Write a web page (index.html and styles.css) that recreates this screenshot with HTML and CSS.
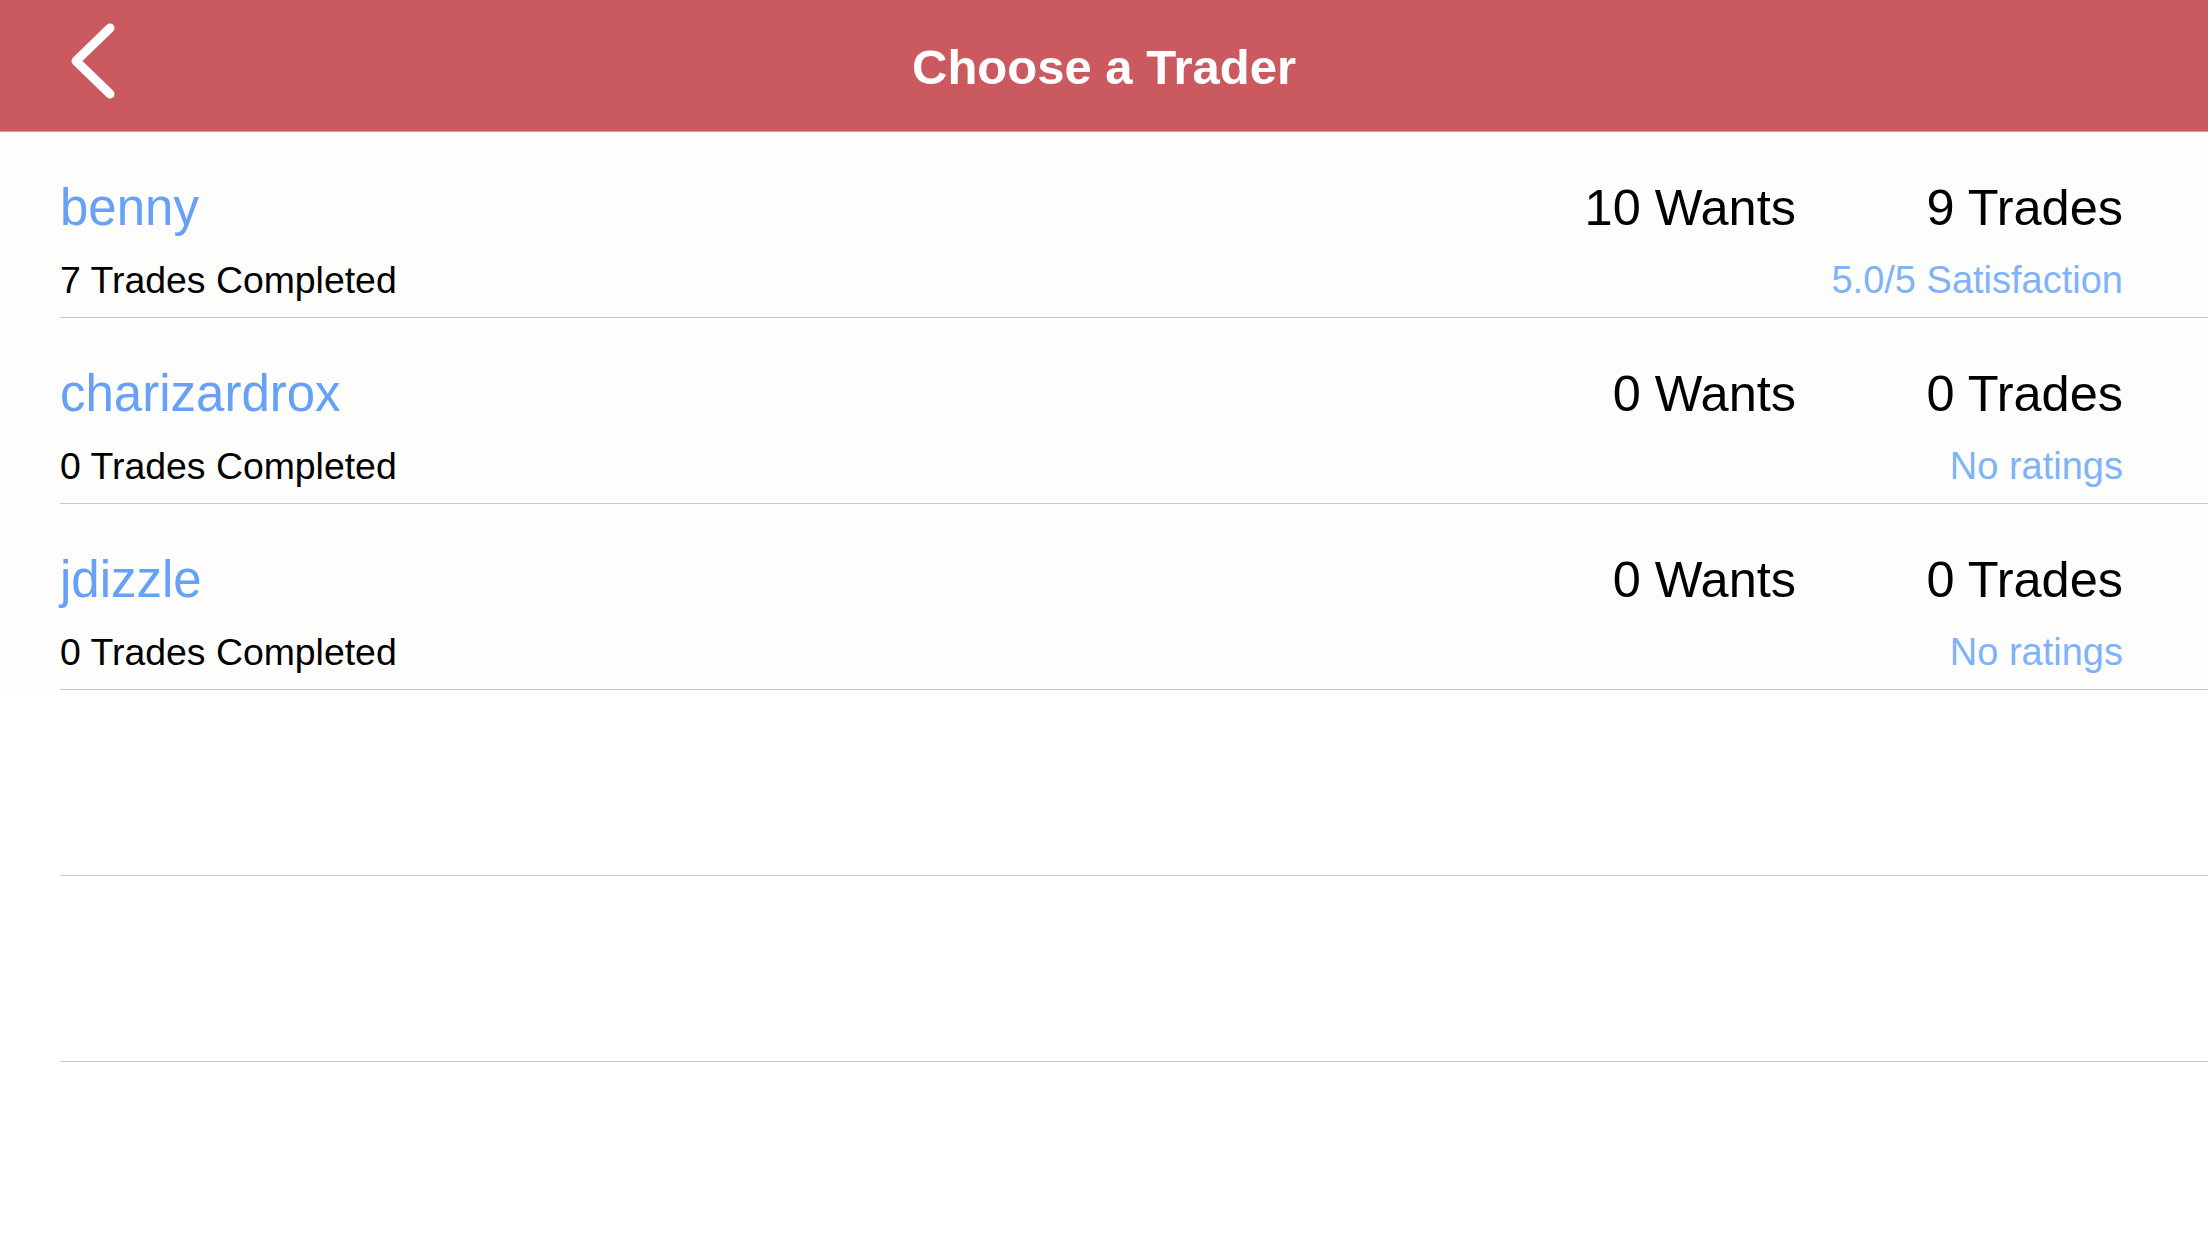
FILE: index.html
```html
<!DOCTYPE html>
<html>
<head>
<meta charset="utf-8">
<title>Choose a Trader</title>
<link rel="stylesheet" href="styles.css">
</head>
<body>
<header class="navbar">
  <div class="nav-left">
    <svg class="back" width="54" height="86" viewBox="0 0 54 86">
      <polyline points="44,10 10,43 44,76" fill="none" stroke="#ffffff" stroke-width="9" stroke-linecap="round" stroke-linejoin="round"/>
    </svg>
  </div>
  <h1 class="title">Choose a Trader</h1>
  <div class="nav-right"></div>
</header>
<main class="list">
  <div class="row">
    <div class="name">benny</div>
    <div class="wants">10 Wants</div>
    <div class="trades">9 Trades</div>
    <div class="completed">7 Trades Completed</div>
    <div class="rating">5.0/5 Satisfaction</div>
  </div>
  <div class="row">
    <div class="name">charizardrox</div>
    <div class="wants">0 Wants</div>
    <div class="trades">0 Trades</div>
    <div class="completed">0 Trades Completed</div>
    <div class="rating">No ratings</div>
  </div>
  <div class="row">
    <div class="name">jdizzle</div>
    <div class="wants">0 Wants</div>
    <div class="trades">0 Trades</div>
    <div class="completed">0 Trades Completed</div>
    <div class="rating">No ratings</div>
  </div>
  <div class="empty-row"></div>
  <div class="empty-row"></div>
</main>
</body>
</html>
```
FILE: styles.css
```css
html, body {
  margin: 0;
  padding: 0;
  background: #ffffff;
  font-family: "Liberation Sans", Arial, Helvetica, sans-serif;
  width: 2208px;
  height: 1242px;
  overflow: hidden;
}

.navbar {
  height: 131px;
  background: #cb5a60;
  border-bottom: 1px solid #b3a9a9;
  display: grid;
  grid-template-columns: 1fr auto 1fr;
  align-items: start;
}

.back {
  display: block;
  margin-left: 66px;
  margin-top: 18px;
}

.title {
  margin: 0;
  padding-top: 39px;
  font-size: 49px;
  line-height: 56px;
  font-weight: bold;
  color: #ffffff;
}

.list {
  display: flex;
  flex-direction: column;
}

.row {
  background: #fdfdfb;
  height: 186px;
  box-sizing: border-box;
  padding: 46px 85px 0 60px;
  display: grid;
  grid-template-columns: 1fr 400px 327px;
  grid-template-rows: 60px 44px;
  row-gap: 20px;
  position: relative;
}

.row::after,
.empty-row::after {
  content: "";
  position: absolute;
  left: 60px;
  right: 0;
  bottom: 0;
  height: 1px;
  background: #c8c7cc;
}

.empty-row {
  height: 186px;
  position: relative;
}

.name {
  grid-column: 1;
  grid-row: 1;
  font-size: 51px;
  line-height: 60px;
  color: #67a0f7;
}

.wants {
  grid-column: 2;
  grid-row: 1;
  text-align: right;
  font-size: 50.5px;
  line-height: 60px;
  color: #000000;
}

.trades {
  grid-column: 3;
  grid-row: 1;
  text-align: right;
  font-size: 50.5px;
  line-height: 60px;
  color: #000000;
}

.completed {
  grid-column: 1;
  grid-row: 2;
  font-size: 37.4px;
  line-height: 44px;
  color: #000000;
}

.rating {
  grid-column: 2 / 4;
  grid-row: 2;
  text-align: right;
  font-size: 38px;
  line-height: 44px;
  color: #7fb3f9;
}
```
